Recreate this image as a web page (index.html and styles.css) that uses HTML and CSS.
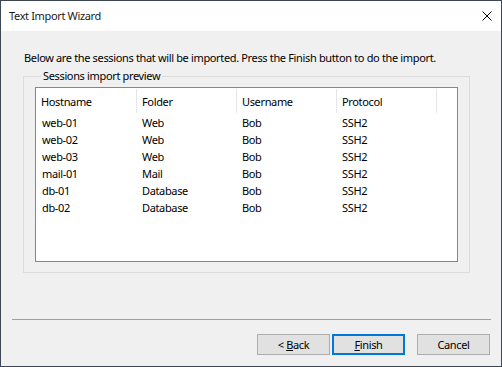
FILE: index.html
```html
<!DOCTYPE html>
<html lang="en">
  <head>
    <meta charset="UTF-8" />
    <title>Text Import Wizard</title>
    <link rel="stylesheet" href="styles.css">
  </head>

  <body>
    <div class="window">
      <div class="titlebar">
        <span class="title">Text Import Wizard</span>
        <button class="close">
          <svg viewBox="0 0 10 10" class="close-icon">
            <path d="M0.5 0.5L9.5 9.5M9.5 0.5L0.5 9.5" />
          </svg>
        </button>
      </div>

      <div class="content">
        <p class="intro">Below are the sessions that will be imported. Press the Finish button to do the import.</p>

        <fieldset class="group">
          <legend class="group-label">Sessions import preview</legend>
          <div class="list">
            <div class="list-header">
              <div class="col-head">Hostname</div>
              <div class="col-head">Folder</div>
              <div class="col-head">Username</div>
              <div class="col-head">Protocol</div>
            </div>
            <div class="list-row"><span>web-01</span><span>Web</span><span>Bob</span><span>SSH2</span></div>
            <div class="list-row"><span>web-02</span><span>Web</span><span>Bob</span><span>SSH2</span></div>
            <div class="list-row"><span>web-03</span><span>Web</span><span>Bob</span><span>SSH2</span></div>
            <div class="list-row"><span>mail-01</span><span>Mail</span><span>Bob</span><span>SSH2</span></div>
            <div class="list-row"><span>db-01</span><span>Database</span><span>Bob</span><span>SSH2</span></div>
            <div class="list-row"><span>db-02</span><span>Database</span><span>Bob</span><span>SSH2</span></div>
          </div>
        </fieldset>

        <hr class="separator" />

        <div class="buttons">
          <button class="btn">&lt; <u>B</u>ack</button>
          <button class="btn btn--default"><u>F</u>inish</button>
          <button class="btn btn--cancel">Cancel</button>
        </div>
      </div>
    </div>
  </body>
</html>
```

FILE: styles.css
```css
/* WINDOW BG: #f0f0f0 */
/* ACCENT: #0078d7 */

* {
  margin: 0;
  padding: 0;
  box-sizing: border-box;
}

body {
  font-family: "Noto Sans", sans-serif;
  font-size: 11px;
  line-height: 16px;
  letter-spacing: -0.35px;
  color: #000;
  background-color: #3a3f47;
}

.window {
  width: 502px;
  height: 367px;
  border: 1px solid #3d4653;
  background-color: #f0f0f0;
  overflow: hidden;

  display: flex;
  flex-direction: column;
}

/* TITLE BAR */
.titlebar {
  height: 30px;
  flex-shrink: 0;
  background-color: #fff;
  padding-left: 8px;

  display: flex;
  align-items: center;
  justify-content: space-between;
}
.title {
  color: #1a1a1a;
}
.close {
  width: 29px;
  height: 29px;
  border: none;
  background: none;

  display: flex;
  align-items: center;
  justify-content: center;
}
.close-icon {
  width: 10px;
  height: 10px;
  stroke: #000;
  stroke-width: 1;
  fill: none;
}

/* CONTENT */
.content {
  flex: 1;
  padding: 19px 10px 0 11px;

  display: flex;
  flex-direction: column;
}
.intro {
  margin-left: 12px;
}

.group {
  margin: 2px 21px 0 11px;
  border: 1px solid #dcdcdc;
  padding: 3px 11px 10px 11px;
}
.group-label {
  margin-left: 6px;
  padding: 0 2px;
}

.list {
  height: 175px;
  background-color: #fff;
  border: 1px solid #828790;
}
.list-header {
  height: 27px;
  display: flex;
}
.col-head {
  width: 100px;
  padding: 5px 0 0 5px;
  border-right: 1px solid #e5e5e5;
  margin: 1px 0 2px;
}
.col-head:first-child {
  width: 101px;
}
.list-row {
  height: 17px;
  display: flex;
}
.list-row span {
  width: 100px;
  padding-left: 6px;
}
.list-row span:first-child {
  width: 100px;
}

.separator {
  margin-top: 46px;
  border: none;
  border-top: 1px solid #a0a0a0;
}

/* BUTTONS */
.buttons {
  margin-top: 14px;
  padding-right: 1px;

  display: flex;
  justify-content: flex-end;
  gap: 2px;
}
.btn {
  width: 73px;
  height: 21px;
  font-family: inherit;
  font-size: 11px;
  letter-spacing: inherit;
  color: #000;
  background-color: #e1e1e1;
  border: 1px solid #adadad;
}
.btn--default {
  border: 2px solid #0078d7;
}
.btn--cancel {
  margin-left: 10px;
}
```
